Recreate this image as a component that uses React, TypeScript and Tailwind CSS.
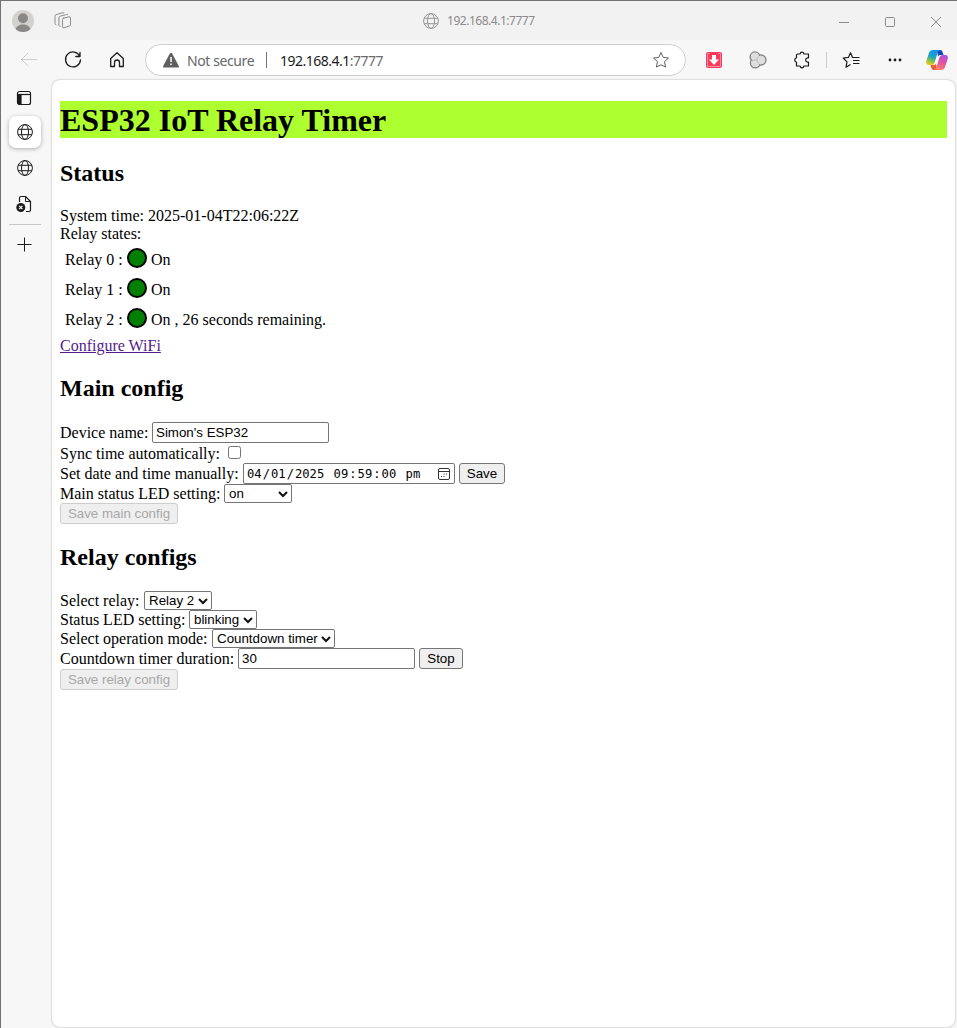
import type { ReactNode } from 'react';

const serif = 'font-["Liberation_Serif",serif]';

function Globe({ className, size = 16 }: { className?: string; size?: number }) {
  return (
    <svg width={size} height={size} viewBox="0 0 16 16" fill="none" stroke="currentColor" strokeWidth="1" className={className}>
      <circle cx="8" cy="8" r="7.4" />
      <ellipse cx="8" cy="8" rx="3.5" ry="7.4" />
      <path d="M1.2 5.3h13.6M1.2 10.7h13.6" />
    </svg>
  );
}

function TitleBar() {
  return (
    <div className="flex h-[39px] shrink-0 items-center bg-[#f2f2f2] text-[#8b8b8b]">
      <svg width="22" height="22" viewBox="0 0 22 22" className="ml-[11px]">
        <clipPath id="avatar"><circle cx="11" cy="11" r="11" /></clipPath>
        <g clipPath="url(#avatar)">
          <rect width="22" height="22" fill="#d3d1cd" />
          <circle cx="11" cy="8.2" r="5" fill="#8a8886" />
          <path d="M3 22c0-5 3.500-7.500 8-7.500s8 2.500 8 7.500z" fill="#8a8886" />
        </g>
      </svg>
      <svg width="18" height="18" viewBox="0 0 18 18" fill="none" stroke="currentColor" strokeLinejoin="round" strokeLinecap="round" className="ml-[20px]">
        <path d="M9.500 6.200 15 4.800Q16.500 4.500 16.500 6V12.500Q16.500 13.700 15.300 14L10 15.800Q8.500 16.200 8.500 14.700V7.500Q8.500 6.500 9.500 6.200Z" />
        <path d="M13.500 2.700Q12.500 2.300 11.500 2.700L6 4.300Q4.900 4.700 4.900 6V13.200Q4.900 14.200 6 14.400" />
        <path d="M9.800.9Q8.800.6 7.800 1L2 2.700Q1 3 1 4.200V11.500Q1 12.500 2 12.800" />
      </svg>
      <Globe className="ml-[351px] text-[#959595]" />
      <span className='ml-[8px] w-[98px] whitespace-nowrap font-["Noto_Sans",sans-serif] text-[12px] tracking-[-0.48px]'>192.168.4.1:7777</span>
      <svg width="112" height="14" viewBox="0 0 112 14" fill="none" stroke="currentColor" className="ml-auto mr-[9px]">
        <path d="M3 8.500h10" />
        <rect x="49.500" y="3.500" width="9" height="9" rx="1" />
        <path d="m95 3 10 10m0-10-10 10" />
      </svg>
    </div>
  );
}

function Star() {
  return (
    <svg width="18" height="18" viewBox="0 0 18 18" fill="none" stroke="#5f5f5f" strokeLinejoin="round">
      <path d="m9 1.500 2.200 4.900 5.300.6-4 3.600 1.100 5.400L9 13.800 4.400 16l1.100-5.400-4-3.600 5.300-.6z" />
    </svg>
  );
}

function Copilot() {
  return (
    <svg width="22" height="20" viewBox="0 0 22 20">
      <defs>
        <linearGradient id="cpA" x1="0.600" y1="0" x2="0.300" y2="1">
          <stop offset="0" stopColor="#168fe8" /><stop offset=".45" stopColor="#19a6c8" /><stop offset=".7" stopColor="#7abf55" /><stop offset="1" stopColor="#f0ce16" />
        </linearGradient>
        <linearGradient id="cpB" x1="0.700" y1="0" x2="0.300" y2="1">
          <stop offset="0" stopColor="#a653e8" /><stop offset=".5" stopColor="#e654a0" /><stop offset="1" stopColor="#fb8465" />
        </linearGradient>
      </defs>
      <path d="M11 0h3.200Q16 0 16.600 2L17.500 5H14Q12.500 5 12 6.500z" fill="#1748b5" />
      <path d="M11 20H7.500Q6 20 5.400 18L4.500 15H8Q9.500 15 10 13.500z" fill="#ee5a38" />
      <path d="M7 0h6.500Q12.200.6 11.500 3L8.600 12.500Q7.800 15 5.500 15H2.500Q-.6 15 .3 11L3 3Q4 0 7 0Z" fill="url(#cpA)" />
      <path d="M15 20H8.500Q9.800 19.400 10.500 17L13.400 7.500Q14.200 5 16.500 5h3Q22.600 5 21.700 9L19 17Q18 20 15 20Z" fill="url(#cpB)" />
    </svg>
  );
}

function Toolbar() {
  return (
    <div className="flex h-[40px] shrink-0 items-center">
      <svg width="120" height="20" viewBox="0 0 120 20" fill="none" stroke="#1b1b1b" strokeWidth="1.300" strokeLinecap="round" strokeLinejoin="round" className="ml-[14px]">
        <path d="M22 9.500H6.500M13 3 6.500 9.500 13 16" stroke="#cfcfcf" strokeWidth="1" />
        <path d="M64.800 6.200A7.500 7.500 0 1 0 65.500 10M65 2.500V6.500H60.800" />
        <path d="M95.700 8.500 102 2.800 108.300 8.500V16.500H104.500V12.500Q104.500 10 102 10T99.500 12.500V16.500H95.700Z" />
      </svg>
      <div className='ml-[10px] flex h-[32px] w-[541px] items-center rounded-full border border-[#cfcfcf] bg-white font-["Noto_Sans",sans-serif] text-[14px]'>
        <svg width="16" height="16" viewBox="0 0 16 16" className="ml-[17px]">
          <path d="M7 1.300Q8 0 9 1.300L15.800 14Q16.200 15.500 15 15.500H1Q-.2 15.500.2 14Z" fill="#5f5f5f" />
          <path d="M8 5v5M8 11.500V13" stroke="#fff" strokeWidth="1.500" />
        </svg>
        <span className="ml-[8px] w-[79px] whitespace-nowrap tracking-[-0.4px] text-[#666]">Not secure</span>
        <span className="h-[16px] w-px bg-[#777]" />
        <span className="ml-[13px] whitespace-nowrap tracking-[-0.5px] text-[#1b1b1b]">192.168.4.1<span className="text-[#6b6b6b]">:7777</span></span>
        <span className="ml-auto mr-[15px]"><Star /></span>
      </div>
      <svg width="16" height="16" viewBox="0 0 16 16" className="ml-[20px]">
        <rect width="16" height="16" rx="2" fill="#f83b5c" />
        <path d="M3.500 1.500h-2v13h13v-13h-2" fill="none" stroke="#ff8b9e" />
        <path d="M6 3h4v4.500h3L8 13 3 7.500h3z" fill="#fff" />
      </svg>
      <svg width="18" height="18" viewBox="0 0 18 18" className="ml-[27px]">
        <circle cx="6" cy="5.800" r="4.800" fill="#dcdcdc" stroke="#838383" strokeWidth="1.500" />
        <circle cx="6.300" cy="12" r="4.800" fill="#dcdcdc" stroke="#838383" strokeWidth="1.500" />
        <circle cx="12" cy="9" r="4.900" fill="#dcdcdc" stroke="#838383" strokeWidth="1.500" />
        <circle cx="6" cy="5.800" r="4.200" fill="#dedede" />
        <circle cx="6.300" cy="12" r="4.200" fill="#dedede" />
        <circle cx="12" cy="9" r="4.300" fill="#dedede" />
        <path d="M9.500 5.500Q7.500 7 8 9T9.500 12.500M2.500 10Q5 8.300 8 9" fill="none" stroke="#bbb" />
      </svg>
      <svg width="18" height="18" viewBox="0 0 18 18" fill="none" stroke="#1b1b1b" strokeWidth="1.200" strokeLinejoin="round" className="ml-[26px]">
        <path d="M4.500 3H7Q7.400 1.200 9 1.200T11 3H15.500V6.800H14.600Q12.600 7.200 12.600 9T14.600 11.200H15.500V15H11Q10.600 16.800 9 16.800T7 15H3.500V11.200Q1.700 10.600 1.700 9T3.500 6.800V4Q3.500 3 4.500 3Z" />
      </svg>
      <span className="ml-[15px] h-[16px] w-px bg-[#ccc]" />
      <svg width="18" height="18" viewBox="0 0 18 18" fill="none" stroke="#1b1b1b" strokeWidth="1.200" strokeLinejoin="round" className="ml-[15px]">
        <path d="M12.500 6.500H10.500L8.500 1.800 6.400 6.400 1.200 7 5 10.800 4 16.200 8.500 13.600" />
        <path d="M11 6.500h6.500M11 9.500h6.500M11 12.500h6.500" />
      </svg>
      <svg width="16" height="4" viewBox="0 0 16 4" fill="#1b1b1b" className="ml-[27px]">
        <circle cx="3" cy="2" r="1.400" /><circle cx="8" cy="2" r="1.400" /><circle cx="13" cy="2" r="1.400" />
      </svg>
      <span className="ml-[23px]"><Copilot /></span>
    </div>
  );
}

function Sidebar() {
  return (
    <div className="flex w-[50px] shrink-0 flex-col items-center pr-[5px] text-[#1b1b1b]">
      <svg width="16" height="16" viewBox="0 0 16 16" fill="none" stroke="currentColor" strokeWidth="1.200" className="mt-[10px] mr-[1px]">
        <rect x="1.500" y="1.500" width="13" height="13" rx="2" />
        <path d="M1.500 4.500h13" />
        <path d="M2 4.500h3v9.800H3.500Q2 14 2 12.500z" fill="currentColor" />
      </svg>
      <div className="mt-[10px] flex h-[32px] w-[32px] items-center justify-center rounded-[7px] bg-white shadow-[0_1px_4px_rgba(0,0,0,0.3)]">
        <Globe />
      </div>
      <Globe className="mt-[12px]" />
      <svg width="18" height="18" viewBox="0 0 18 18" fill="none" stroke="currentColor" strokeWidth="1.200" strokeLinejoin="round" className="mt-[19px] mr-px">
        <path d="M4.500 7V3Q4.500 1.500 6 1.500H10.500L15.500 6.500V15Q15.500 16.500 14 16.500H11" />
        <path d="M10.500 1.500V6.500H15.500" strokeWidth="1" />
        <circle cx="5.800" cy="12.500" r="4.500" fill="currentColor" stroke="none" />
        <path d="m4.200 10.900 3.200 3.200m0-3.200-3.200 3.200" stroke="#fff" />
      </svg>
      <div className="mt-[11px] h-px w-[32px] bg-[#c8c8c8]" />
      <svg width="16" height="16" viewBox="0 0 16 16" stroke="currentColor" className="mt-[11px] mr-px">
        <path d="M8.500 1.500v14M1.500 8.500h14" />
      </svg>
    </div>
  );
}

function Heading({ children, className }: { children: ReactNode; className: string }) {
  return <h2 className={`h-[27px] text-[24px] leading-[27px] font-bold ${className}`}>{children}</h2>;
}

function Relay({ id, note = '' }: { id: number; note?: string }) {
  return (
    <div className="flex h-[30px] pl-[5px]">
      <span className="w-[62px] leading-[30px]">Relay {id} :</span>
      <span className="mt-[3px] size-[20px] rounded-full border-2 border-black bg-[#008000]" />
      <span className="ml-[4px] leading-[30px]">On{note}</span>
    </div>
  );
}

const field = 'h-[21px] rounded-[2px] border border-[#767676] bg-white pl-[3px] font-["Liberation_Sans",sans-serif] text-[13.333px] leading-[19px] text-black';

function Btn({ children, className, disabled }: { children: ReactNode; className: string; disabled?: boolean }) {
  return (
    <button
      disabled={disabled}
      className={`h-[21px] shrink-0 rounded-[3px] border border-[#767676] bg-[#efefef] text-center font-["Liberation_Sans",sans-serif] text-[13.333px] leading-[19px] whitespace-nowrap text-black disabled:border-[#cdcdcd] disabled:text-[#a8a8a8] ${className}`}
    >
      {children}
    </button>
  );
}

function Select({ value, className }: { value: string; className: string }) {
  return (
    <button className={`flex h-[19px] items-center justify-between rounded-[2px] border border-[#767676] bg-white pr-[3px] pl-[4px] font-["Liberation_Sans",sans-serif] text-[13.333px] leading-[17px] whitespace-nowrap text-black ${className}`}>
      <span>{value}</span>
      <svg width="10" height="8" viewBox="0 0 10 8" fill="none" stroke="#101010" strokeWidth="2" className="shrink-0">
        <path d="m1 2 4 4 4-4" />
      </svg>
    </button>
  );
}

function Row({ label, labelClass, className, children }: { label: string; labelClass: string; className: string; children: ReactNode }) {
  return (
    <div className={`flex ${className}`}>
      <span className={`shrink-0 whitespace-nowrap ${labelClass}`}>{label}</span>
      {children}
    </div>
  );
}

function DateTime() {
  return (
    <div className='flex h-[21px] w-[212px] items-center rounded-[2px] border border-[#767676] bg-white pl-[2px] font-["DejaVu_Sans_Mono",monospace] text-[12.180px] leading-[20px]'>
      <span className="px-px">04</span>/<span className="px-px">01</span>/<span className="px-px">2025</span>
      <span className="ml-[7.330px] px-px">09</span>:<span className="px-px">59</span>:<span className="px-px">00</span>
      <span className="ml-[7.330px] px-px">pm</span>
      <svg width="12" height="12" viewBox="0 0 12 12" fill="none" stroke="#333" className="mr-[4px] ml-auto">
        <rect x=".5" y=".5" width="11" height="11" rx="1.500" />
        <path d="M.5 3.500h11" />
        <path d="M5.500 6h1M8 6h1M3 8.500h1M5.500 8.500h1" strokeWidth="1.200" />
      </svg>
    </div>
  );
}

function Page() {
  return (
    <main className={`flex-1 rounded-[8px] bg-white pl-[8px] pr-[8px] text-[16px] leading-[18px] text-black shadow-[0_0_2px_rgba(0,0,0,0.35)] ${serif}`}>
      <h1 className="mt-[21px] h-[37px] bg-[#adff2f] text-[32px] leading-[38px] font-bold">ESP32 IoT Relay Timer</h1>
      <Heading className="mt-[22px]">Status</Heading>
      <div className="mt-[20px]">System time: 2025-01-04T22:06:22Z</div>
      <div>Relay states:</div>
      <div className="mt-[2px]">
        <Relay id={0} />
        <Relay id={1} />
        <Relay id={2} note=" , 26 seconds remaining." />
      </div>
      <div className="mt-[2px]"><a className="text-[#551a8b] underline">Configure WiFi</a></div>

      <Heading className="mt-[20px]">Main config</Heading>
      <Row label="Device name:" labelClass="w-[92px] leading-[21px]" className="mt-[20px] h-[21px]">
        <input className={`w-[177px] ${field}`} defaultValue="Simon's ESP32" />
      </Row>
      <Row label="Sync time automatically:" labelClass="w-[168px] leading-[22px]" className="h-[20px]">
        <input type="checkbox" className="mt-[3px] size-[13px] appearance-none rounded-[2.500px] border border-[#767676] bg-white" />
      </Row>
      <Row label="Set date and time manually:" labelClass="w-[183px] leading-[21px]" className="h-[21px]">
        <DateTime />
        <Btn className="ml-[4px] w-[46px]">Save</Btn>
      </Row>
      <Row label="Main status LED setting:" labelClass="w-[164px] leading-[19px]" className="h-[19px]">
        <Select value="on" className="w-[68px]" />
      </Row>
      <Btn disabled className="block w-[118px]">Save main config</Btn>

      <Heading className="mt-[20px]">Relay configs</Heading>
      <Row label="Select relay:" labelClass="w-[84px] leading-[19px]" className="mt-[20px] h-[19px]">
        <Select value="Relay 2" className="w-[68px]" />
      </Row>
      <Row label="Status LED setting:" labelClass="w-[129px] leading-[19px]" className="h-[19px]">
        <Select value="blinking" className="w-[68px]" />
      </Row>
      <Row label="Select operation mode:" labelClass="w-[152px] leading-[19px]" className="h-[19px]">
        <Select value="Countdown timer" className="w-[123px]" />
      </Row>
      <Row label="Countdown timer duration:" labelClass="w-[178px] leading-[21px]" className="h-[21px]">
        <input className={`w-[177px] ${field}`} defaultValue="30" />
        <Btn className="ml-[4px] w-[44px]">Stop</Btn>
      </Row>
      <Btn disabled className="block w-[118px]">Save relay config</Btn>
    </main>
  );
}

export default function App() {
  return (
    <div className="flex h-[1028px] w-[957px] flex-col overflow-hidden border-t border-l border-[#747174] bg-[#f7f7f7]">
      <TitleBar />
      <Toolbar />
      <div className="flex min-h-0 flex-1 pr-[2px] pb-[1px] pl-[1px]">
        <Sidebar />
        <Page />
      </div>
    </div>
  );
}
